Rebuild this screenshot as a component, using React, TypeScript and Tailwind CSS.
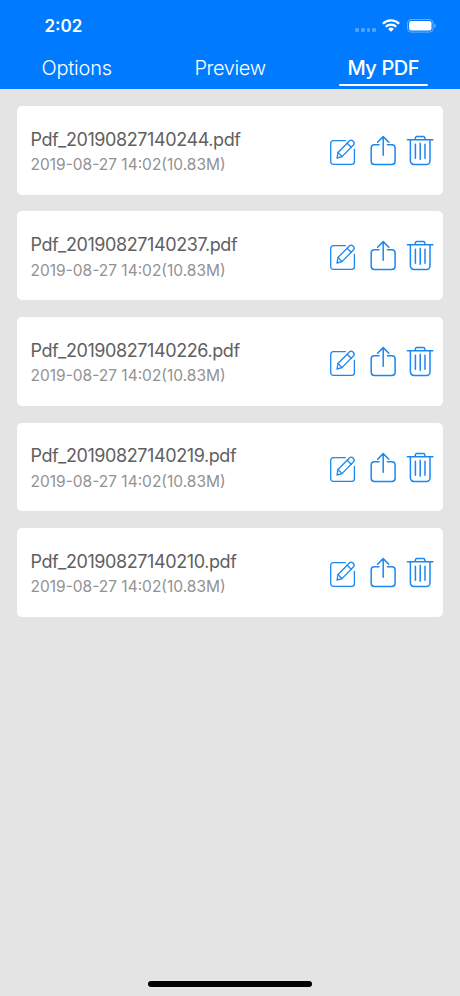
const files = [
  "Pdf_20190827140244.pdf",
  "Pdf_20190827140237.pdf",
  "Pdf_20190827140226.pdf",
  "Pdf_20190827140219.pdf",
  "Pdf_20190827140210.pdf",
];

const stroke = {
  fill: "none",
  stroke: "currentColor",
  strokeWidth: 1.5,
  strokeLinecap: "round" as const,
  strokeLinejoin: "round" as const,
};

function EditIcon() {
  return (
    <svg className="h-8 w-7" viewBox="0 0 28 32" {...stroke} strokeWidth={1.3}>
      <path d="M16.4 5.7H4.3a2.6 2.6 0 0 0-2.6 2.6v18.5a2.6 2.6 0 0 0 2.6 2.6h18.5a2.6 2.6 0 0 0 2.6-2.6V14.4" />
      <path d="M8 23l1-5.5L20.6 5.8q1.7-1.5 3.6.4t.4 3.6L13 21.6z" />
      <path d="M9 17.5l4 4.1M18.2 8.3l4 4" />
    </svg>
  );
}

function ShareIcon() {
  return (
    <svg className="h-8 w-7" viewBox="0 0 28 32" {...stroke}>
      <path d="M10 9.8H5.4a3.2 3.2 0 0 0-3.2 3.2v13.3a3.2 3.2 0 0 0 3.2 3.2h17.5a3.2 3.2 0 0 0 3.2-3.2V13a3.2 3.2 0 0 0-3.2-3.2h-4.5" />
      <path d="M14.2 20.2V1.7M8.6 7.2l5.6-5.6 5.6 5.6" />
    </svg>
  );
}

function TrashIcon() {
  return (
    <svg className="h-8 w-7" viewBox="0 0 28 32" {...stroke}>
      <path d="M1.4 4.7h25.4M9 4.5l.6-2.1q.3-.8 1.1-.8h6.8q.8 0 1.1.8l.6 2.1" />
      <path d="M4.4 4.8V26a3.4 3.4 0 0 0 3.4 3.4h12.8A3.4 3.4 0 0 0 24 26V4.8" />
      <path d="M9.4 9.2v14M14.2 8.2v16M19 9.2v14" />
    </svg>
  );
}

function StatusBar() {
  return (
    <div className="flex h-[50px] items-center justify-between pr-[24px] pl-[44.5px]">
      <span className="pt-[2px] text-[17px] leading-5 font-semibold">2:02</span>
      <div className="flex items-center pt-[1px]">
        <div className="mt-[9px] mr-[6px] flex gap-[1.8px]">
          <i className="size-[3.8px] rounded-[1px] bg-white/30" />
          <i className="size-[3.8px] rounded-[1px] bg-white/30" />
          <i className="size-[3.8px] rounded-[1px] bg-white/30" />
          <i className="size-[3.8px] rounded-[1px] bg-white/30" />
        </div>
        <svg className="h-[13px] w-[18px]" viewBox="0 0 18 13" fill="none" stroke="white" strokeWidth="2.3">
          <path d="M.9 4.7a11.6 11.6 0 0 1 16.2 0M3.8 7.7a7.4 7.4 0 0 1 10.4 0" />
          <path d="M9 12.8L6.1 9.9a4.1 4.1 0 0 1 5.8 0z" fill="white" stroke="none" />
        </svg>
        <svg className="ml-[7px] h-[14px] w-[29px]" viewBox="0 0 29 14">
          <rect x=".5" y=".5" width="25.6" height="12.6" rx="3.6" fill="none" stroke="white" strokeOpacity=".4" />
          <rect x="2.1" y="2.1" width="22.4" height="9.4" rx="2" fill="white" />
          <path d="M27.3 4.5q1.4.7 1.4 2.3t-1.4 2.3z" fill="white" fillOpacity=".45" />
        </svg>
      </div>
    </div>
  );
}

export default function App() {
  return (
    <div className="flex h-[996px] w-[460px] flex-col overflow-hidden bg-[#e4e4e4] font-['Inter','Liberation_Sans',sans-serif]">
      <header className="h-[89px] shrink-0 bg-[#007bff] text-white">
        <StatusBar />
        <nav className="grid h-[39px] grid-cols-3 text-center text-[20px] leading-6 tracking-[-0.2px]">
          <span className="pt-[6px] font-light">Options</span>
          <span className="pt-[6px] font-light tracking-[-0.4px]">Preview</span>
          <span className="flex flex-col items-center pt-[6px] font-medium tracking-[-0.4px]">
            My PDF
            <i className="mt-[3.5px] h-[2px] w-[89px] rounded-full bg-white" />
          </span>
        </nav>
      </header>
      <main className="flex flex-1 flex-col gap-[16.8px] px-[17px] pt-[16.8px]">
        {files.map((name) => (
          <article key={name} className="flex h-[88.8px] shrink-0 justify-between rounded-[5px] bg-white pr-[9px] pl-[13.5px]">
            <div className="pt-[21.8px] whitespace-nowrap">
              <h2 className="text-[18px] leading-6 tracking-[-0.41px] text-[#606060]">{name}</h2>
              <p className="mt-[3.4px] text-[15.5px] leading-5 text-[#929292]">2019-08-27 14:02(10.83M)</p>
            </div>
            <div className="flex pt-[29px] text-[#1c87f2]">
              <button aria-label="Edit" className="mr-3 h-8"><EditIcon /></button>
              <button aria-label="Share" className="mr-[9px] h-8"><ShareIcon /></button>
              <button aria-label="Delete" className="h-8"><TrashIcon /></button>
            </div>
          </article>
        ))}
      </main>
      <footer className="flex h-[15px] justify-center">
        <div className="h-[6px] w-[164px] rounded-full bg-black" />
      </footer>
    </div>
  );
}
